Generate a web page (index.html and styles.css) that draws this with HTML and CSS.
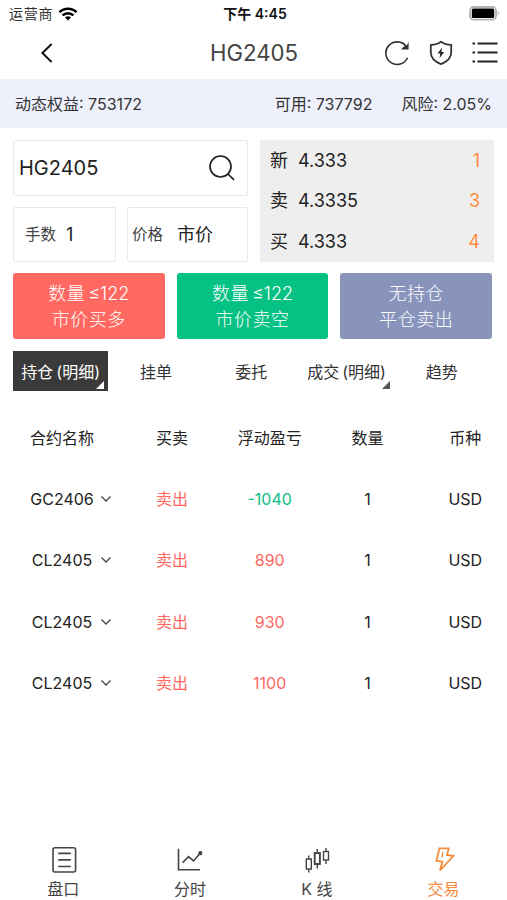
FILE: index.html
```html
<!DOCTYPE html>
<html lang="zh-CN">
<head>
    <meta charset="UTF-8">
    <meta name="viewport" content="width=device-width, initial-scale=1.0">
    <title>交易</title>
    <link rel="stylesheet" href="styles.css">
</head>
<body>
    <div class="status">
        <div class="carrier">
            <span>运营商</span>
            <svg width="20" height="14" viewBox="0 0 20 14" fill="none" stroke="#000" stroke-width="2.5">
                <path d="M1.4 5.2a12.4 12.4 0 0 1 17.2 0"/>
                <path d="M4.6 8.4a7.8 7.8 0 0 1 10.8 0"/>
                <path d="M7 10.6a4.3 4.3 0 0 1 6 0L10 13.6z" fill="#000" stroke="none"/>
            </svg>
        </div>
        <div class="time">下午 4:45</div>
        <svg class="battery" width="32" height="15" viewBox="0 0 32 15">
            <rect x="1" y="1" width="26" height="12.6" rx="3.5" fill="#fff" stroke="#b4b4b4" stroke-width="1.8"/>
            <rect x="2.8" y="2.6" width="22.4" height="9.4" rx="1.5" fill="#000"/>
            <path d="M28.6 5v4.6c1.8-.6 1.8-4 0-4.6z" fill="#b4b4b4"/>
        </svg>
    </div>

    <header class="nav">
        <svg class="back" width="14" height="22" viewBox="0 0 14 22" fill="none" stroke="#111" stroke-width="2">
            <path d="M11.6 2L2.4 11l9.2 9"/>
        </svg>
        <h1>HG2405</h1>
        <div class="tools">
            <svg width="26" height="26" viewBox="0 0 26 26" fill="none" stroke="#333" stroke-width="1.6">
                <path d="M23.5 17.7A11.3 11.3 0 1 1 22.2 6.4"/>
                <path d="M24.6 1.8v7.6H17l3.2-3.2 2.600-.6z" fill="#333" stroke="none"/>
            </svg>
            <svg width="24" height="26" viewBox="0 0 24 26" fill="none" stroke="#333" stroke-width="1.8" stroke-linejoin="round">
                <path d="M12 1.6c2.5 2.1 6 3.1 10.2 3.2v7.5c0 5.6-4.5 9.6-10.2 11.8C6.3 21.9 1.8 17.9 1.8 12.3V4.8C6 4.7 9.5 3.7 12 1.6z"/>
                <path d="M13 7.6l-4.400 6h2.7l-.8 4.6 4.7-6.3h-2.8z" fill="#222" stroke="none"/>
            </svg>
            <svg width="26" height="24" viewBox="0 0 26 24" stroke="#222" stroke-width="1.8">
                <path d="M0.500 2.500H3M5.500 2.500h20M0.500 11.500H3M5.500 11.500h20M0.500 20.500H3M5.500 20.500h20"/>
            </svg>
        </div>
    </header>

    <div class="account">
        <span>动态权益: 753172</span>
        <span class="free">可用: 737792</span>
        <span>风险: 2.05%</span>
    </div>

    <section class="order">
        <div class="form">
            <div class="field symbol">
                <span>HG2405</span>
                <svg width="28" height="28" viewBox="0 0 28 28" fill="none" stroke="#222" stroke-width="1.7">
                    <circle cx="12.5" cy="12.5" r="10.5"/>
                    <path d="M20 20l6 5.8"/>
                </svg>
            </div>
            <div class="field qty"><label>手数</label><span>1</span></div>
            <div class="field price"><label>价格</label><span>市价</span></div>
        </div>
        <div class="quote">
            <div class="quote-row"><span class="side">新</span><span>4.333</span><span class="vol">1</span></div>
            <div class="quote-row"><span class="side">卖</span><span>4.3335</span><span class="vol">3</span></div>
            <div class="quote-row"><span class="side">买</span><span>4.333</span><span class="vol">4</span></div>
        </div>
    </section>

    <div class="actions">
        <div class="btn buy"><span>数量<i>≤122</i></span><span>市价买多</span></div>
        <div class="btn sell"><span>数量<i>≤122</i></span><span>市价卖空</span></div>
        <div class="btn close"><span>无持仓</span><span>平仓卖出</span></div>
    </div>

    <div class="tabs">
        <div class="tab active more">持仓<i>(明细)</i></div>
        <div class="tab">挂单</div>
        <div class="tab">委托</div>
        <div class="tab more">成交<i>(明细)</i></div>
        <div class="tab">趋势</div>
    </div>

    <div class="positions">
        <div class="row head">
            <span class="name"><b>合约名称</b></span><span>买卖</span><span>浮动盈亏</span><span>数量</span><span>币种</span>
        </div>
        <div class="row">
            <span class="name"><b>GC2406</b><svg class="arrow" viewBox="0 0 12 8"><path d="M1.5 1.5L6 6l4.5-4.5"/></svg></span>
            <span class="red">卖出</span><span class="green">-1040</span><span>1</span><span>USD</span>
        </div>
        <div class="row">
            <span class="name"><b>CL2405</b><svg class="arrow" viewBox="0 0 12 8"><path d="M1.5 1.5L6 6l4.5-4.5"/></svg></span>
            <span class="red">卖出</span><span class="red">890</span><span>1</span><span>USD</span>
        </div>
        <div class="row">
            <span class="name"><b>CL2405</b><svg class="arrow" viewBox="0 0 12 8"><path d="M1.5 1.5L6 6l4.5-4.5"/></svg></span>
            <span class="red">卖出</span><span class="red">930</span><span>1</span><span>USD</span>
        </div>
        <div class="row">
            <span class="name"><b>CL2405</b><svg class="arrow" viewBox="0 0 12 8"><path d="M1.5 1.5L6 6l4.5-4.5"/></svg></span>
            <span class="red">卖出</span><span class="red">1100</span><span>1</span><span>USD</span>
        </div>
    </div>

    <footer class="tabbar">
        <div class="item">
            <svg width="28" height="28" viewBox="0 0 28 28" stroke-width="1.6">
                <rect x="4" y="2.8" width="22.6" height="24.2" rx="2"/>
                <path d="M9.3 8.4h12.5M9.3 14.9h12.5M9.3 21.5h12.5"/>
            </svg>
            <span>盘口</span>
        </div>
        <div class="item">
            <svg width="28" height="28" viewBox="0 0 28 28" stroke-width="1.6">
                <path d="M2.500 3.8v21H24M6.5 17.7l6-6 5 4.2L24 8.400"/>
                <circle cx="24.3" cy="8.2" r="1.3" fill="#444"/>
            </svg>
            <span>分时</span>
        </div>
        <div class="item">
            <svg width="28" height="28" viewBox="0 0 28 28" stroke-width="1.4">
                <path d="M5.8 10.5v4M5.8 24v3.500M14.3 4v4M14.3 19v4.500M23 3v3.500M23 15v4"/>
                <rect x="3.3" y="14" width="5" height="10"/>
                <rect x="11.7" y="8" width="5.2" height="11" stroke-width="1.9"/>
                <rect x="20.5" y="6.5" width="5" height="8.5"/>
            </svg>
            <span>K 线</span>
        </div>
        <div class="item on">
            <svg width="28" height="28" viewBox="0 0 28 28" stroke-width="1.8">
                <path d="M9.400 3.300h9.300L17 10l6.400 1L10 25.500l2.400-8.800-6-1z"/>
                <path d="M12.800 7l-.8 5.500" stroke-width="1.3"/>
            </svg>
            <span>交易</span>
        </div>
    </footer>
</body>
</html>
```

FILE: styles.css
```css
*{
    box-sizing: border-box;
}
body{
    margin: 0;
    height: 900px;
    display: flex;
    flex-direction: column;
    background: #fff;
    color: #333;
    font-family: Inter, "Noto Sans CJK SC", sans-serif;
    font-size: 16px;
    line-height: 1;
    overflow: hidden;
}
svg{
    display: block;
    flex-shrink: 0;
}
i{
    font-style: normal;
}
b{
    font-weight: 400;
}

/* status bar */
.status{
    display: grid;
    grid-template-columns: 1fr auto 1fr;
    align-items: center;
    height: 27px;
    padding: 0 6px 0 9px;
    font-size: 14px;
}
.carrier{
    display: flex;
    align-items: center;
    gap: 5px;
    letter-spacing: 0.8px;
}
.time{
    padding-top: 1px;
    font-weight: 600;
    color: #111;
    font-size: 14px;
}
.battery{
    justify-self: end;
}

/* title bar */
.nav{
    display: grid;
    grid-template-columns: 1fr auto 1fr;
    align-items: center;
    height: 52px;
    padding: 0 9px 0 40px;
}
.nav h1{
    margin: 0 0 0 -30px;
    font-size: 22.2px;
    font-weight: 400;
    color: #444;
}
.tools{
    display: flex;
    align-items: center;
    justify-content: flex-end;
    gap: 19px;
}

.account{
    display: flex;
    align-items: center;
    height: 49px;
    padding: 0 15px;
    background: #eef0fb;
}
.account .free{
    margin-left: auto;
    margin-right: 29px;
}

/* order form */
.order{
    display: flex;
    gap: 12px;
    padding: 12px 13px 0;
}
.form{
    display: grid;
    grid-template-columns: 103px 121px;
    grid-template-rows: 56px 55px;
    gap: 11px;
}
.field{
    display: flex;
    align-items: center;
    border: 1px solid #e8e8e8;
    border-radius: 2px;
    color: #222;
    font-size: 18px;
}
.field label{
    font-size: 15.5px;
    color: #444;
}
.symbol{
    grid-column: 1 / 3;
    justify-content: space-between;
    padding: 0 11px 0 5px;
    font-size: 20px;
}
.qty{
    padding: 1px 0 0 11px;
    gap: 10px;
}
.price{
    padding: 1px 0 0 4px;
    gap: 14px;
}
.quote{
    width: 234px;
    height: 122px;
    padding-top: 1px;
    background: #eee;
    color: #222;
    font-size: 18px;
}
.quote-row{
    display: flex;
    align-items: center;
    height: 40.3px;
    padding: 0 14px 0 10px;
}
.side{
    width: 28px;
}
.vol{
    margin-left: auto;
    color: #ff8c3c;
}

.actions{
    display: grid;
    grid-template-columns: repeat(3, 151.7px);
    gap: 12px;
    padding: 11px 12px 0 13px;
}
.btn{
    display: flex;
    flex-direction: column;
    align-items: center;
    justify-content: center;
    height: 66px;
    padding-top: 2px;
    border-radius: 3px;
    color: #fff;
    font-size: 18px;
    font-weight: 300;
    line-height: 26px;
    letter-spacing: 0.5px;
}
.btn i{
    margin-left: 3px;
    letter-spacing: 0;
}
.buy{
    background: #ff6961;
}
.sell{
    background: #05c184;
}
.close{
    background: #8994bd;
}

/* list tabs */
.tabs{
    display: grid;
    grid-template-columns: repeat(5, 95.3px);
    margin: 12px 13px 0;
}
.tab{
    position: relative;
    display: flex;
    align-items: center;
    justify-content: center;
    height: 40px;
    padding-top: 1px;
    white-space: nowrap;
}
.tab i{
    margin-left: 3px;
}
.active{
    background: #3a3a3a;
    color: #fff;
}
.more::after{
    content: "";
    position: absolute;
    right: 4px;
    bottom: 2px;
    border-left: 8px solid transparent;
    border-bottom: 8px solid #555;
}
.active::after{
    border-bottom-color: #fff;
}

.positions{
    padding-top: 16.5px;
}
.row{
    display: grid;
    grid-template-columns: 123px repeat(4, 97.8px);
    align-items: center;
    justify-items: center;
    height: 61.2px;
    color: #222;
}
.name{
    display: flex;
    align-items: center;
    justify-self: start;
    padding-left: 29px;
}
.name b{
    width: 66px;
    text-align: center;
}
.arrow{
    width: 12px;
    height: 8px;
    margin-left: 5px;
    fill: none;
    stroke: #444;
    stroke-width: 1.3;
}
.red{
    color: #fb6962;
}
.green{
    color: #0fbe83;
}

/* bottom bar */
.tabbar{
    display: grid;
    grid-template-columns: repeat(4, 1fr);
    margin-top: auto;
    height: 55px;
}
.item{
    display: flex;
    flex-direction: column;
    align-items: center;
    gap: 8px;
    color: #444;
    font-size: 16px;
}
.item svg{
    fill: none;
    stroke: currentColor;
}
.on{
    color: #f58b3c;
}
```
